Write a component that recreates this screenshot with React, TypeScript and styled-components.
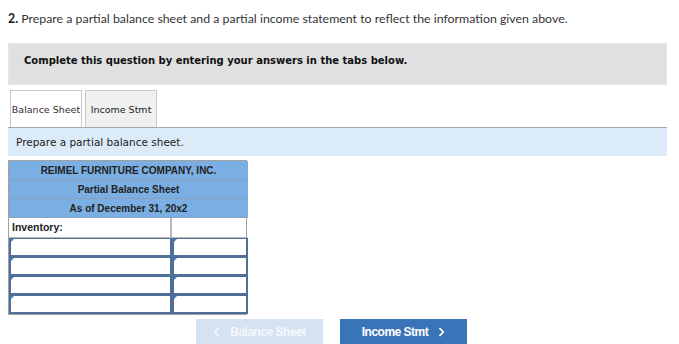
import React from 'react';
import styled, { createGlobalStyle } from 'styled-components';

const GlobalStyle = createGlobalStyle`
  body {
    margin: 0;
    background: #fff;
  }
`;

const Page = styled.div`
  width: 679px;
  height: 344px;
  overflow: hidden;
  padding: 11px 12px 0 8px;
  box-sizing: border-box;
`;

const Question = styled.p`
  margin: 0;
  font-family: 'Lato', 'Open Sans', sans-serif;
  font-size: 12.35px;
  line-height: 16px;
  color: #333;
  b {
    font-weight: 700;
    color: #222;
  }
`;

const Instructions = styled.div`
  margin-top: 16px;
  height: 42px;
  padding: 10px 0 0 15px;
  background: #e0e0e0;
  border: 1px solid #e6e6e6;
  box-sizing: border-box;
  font-family: 'DejaVu Sans', Verdana, sans-serif;
  font-weight: 700;
  font-size: 10px;
  line-height: 14px;
  color: #111;
`;

const TabBar = styled.div`
  margin-top: 5px;
  display: flex;
  gap: 3px;
  padding-left: 2px;
  border-bottom: 1px solid #a8a8a8;
`;

const Tab = styled.div<{ $active?: boolean }>`
  width: 72px;
  height: 37px;
  box-sizing: border-box;
  display: flex;
  align-items: center;
  justify-content: center;
  border: 1px solid #c8c8c8;
  border-bottom: none;
  background: ${(p) => (p.$active ? '#fff' : '#f0f0f0')};
  font-family: 'DejaVu Sans', Verdana, sans-serif;
  font-size: 9.5px;
  color: ${(p) => (p.$active ? '#3a2a3a' : '#222')};
  white-space: nowrap;
`;

const Prompt = styled.div`
  height: 28px;
  display: flex;
  align-items: center;
  padding-left: 8px;
  background: #dcebf8;
  font-family: 'DejaVu Sans', Verdana, sans-serif;
  font-size: 10.5px;
  color: #222;
`;

const Sheet = styled.div`
  margin-top: 4px;
  width: 239px;
  display: grid;
  grid-template-columns: 163px 76px;
  border: 1px solid #a0a0a0;
  box-sizing: border-box;
`;

const HeadRow = styled.div`
  grid-column: 1 / 3;
  height: 19px;
  box-sizing: border-box;
  display: flex;
  align-items: center;
  justify-content: center;
  background: #7bafe3;
  border-bottom: 1px solid #8aa0b8;
  font-family: 'Liberation Sans', Arial, sans-serif;
  font-weight: 700;
  font-size: 10px;
  color: #222;
`;

const LabelCell = styled.div<{ $right?: boolean }>`
  height: 20px;
  box-sizing: border-box;
  display: flex;
  align-items: center;
  padding: 0 0 2px 3px;
  border-right: ${(p) => (p.$right ? 'none' : '2px solid #b8b8b8')};
  border-bottom: 1px solid #b8b8b8;
  font-family: 'Liberation Sans', Arial, sans-serif;
  font-weight: 700;
  font-size: 10.5px;
  color: #222;
`;

const InputCell = styled.div`
  position: relative;
  height: 19px;
  box-sizing: border-box;
  border: 2px solid #4f6f98;
  border-top-width: 1px;
  background: #fff;
  &::before {
    content: '';
    position: absolute;
    left: 0;
    top: 0;
    border-top: 3px solid #3d7fd0;
    border-right: 3px solid transparent;
    border-bottom: 2px solid transparent;
  }
`;

const Nav = styled.div`
  margin-top: 4px;
  display: flex;
  gap: 17px;
  padding-left: 188px;
`;

const NavButton = styled.div<{ $disabled?: boolean }>`
  width: 127px;
  height: 26px;
  display: flex;
  align-items: center;
  justify-content: center;
  gap: 10px;
  background: ${(p) => (p.$disabled ? '#d5e2f1' : '#3a74b8')};
  color: ${(p) => (p.$disabled ? '#f4f8fc' : '#fff')};
  font-family: 'Liberation Sans', Arial, sans-serif;
  font-weight: 700;
  font-size: 12px;
  letter-spacing: -0.5px;
`;

const Chevron = ({ dir }: { dir: 'left' | 'right' }) => (
  <svg width="7" height="10" viewBox="0 0 7 10">
    <path
      d={dir === 'left' ? 'M5.5 1 L1.8 5 L5.5 9' : 'M1.5 1 L5.2 5 L1.5 9'}
      fill="none"
      stroke="currentColor"
      strokeWidth="1.8"
    />
  </svg>
);

const rows = [0, 1, 2, 3];

export default function App() {
  return (
    <>
      <GlobalStyle />
      <Page>
        <Question>
          <b>2.</b> Prepare a partial balance sheet and a partial income statement to reflect the information given above.
        </Question>
        <Instructions>Complete this question by entering your answers in the tabs below.</Instructions>
        <TabBar>
          <Tab $active>Balance Sheet</Tab>
          <Tab>Income Stmt</Tab>
        </TabBar>
        <Prompt>Prepare a partial balance sheet.</Prompt>
        <Sheet>
          <HeadRow>REIMEL FURNITURE COMPANY, INC.</HeadRow>
          <HeadRow>Partial Balance Sheet</HeadRow>
          <HeadRow>As of December 31, 20x2</HeadRow>
          <LabelCell>Inventory:</LabelCell>
          <LabelCell $right />
          {rows.map((r) => (
            <React.Fragment key={r}>
              <InputCell />
              <InputCell />
            </React.Fragment>
          ))}
        </Sheet>
        <Nav>
          <NavButton $disabled>
            <Chevron dir="left" />
            Balance Sheet
          </NavButton>
          <NavButton>
            Income Stmt
            <Chevron dir="right" />
          </NavButton>
        </Nav>
      </Page>
    </>
  );
}
